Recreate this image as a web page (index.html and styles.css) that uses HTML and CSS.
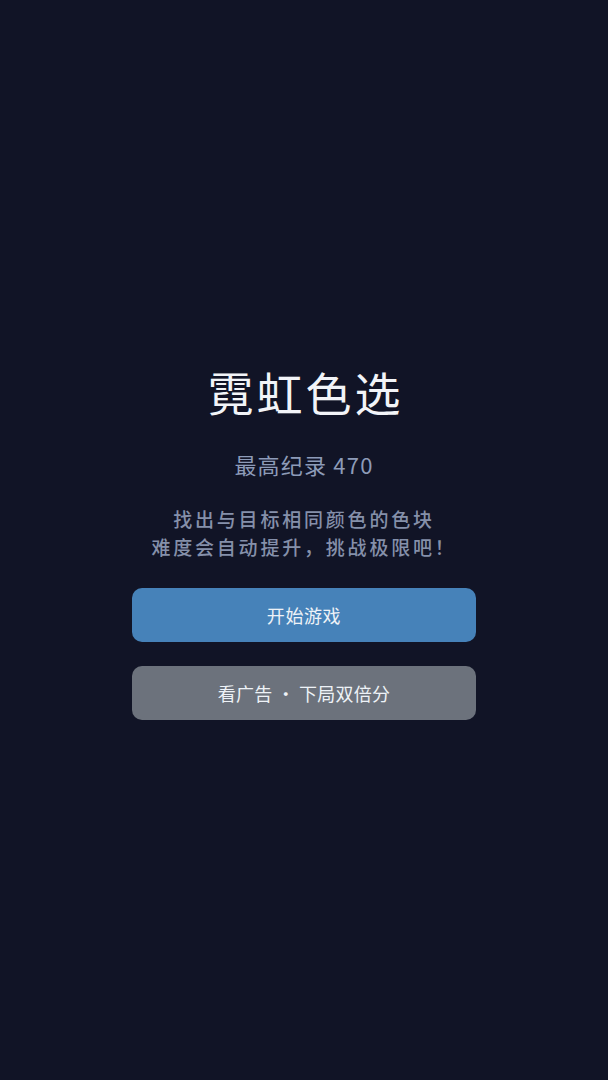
FILE: index.html
```html
<!DOCTYPE html>
<html lang="zh">
<head>
<meta charset="utf-8">
<link rel="stylesheet" href="styles.css">
</head>
<body>
<main class="screen">
  <h1 class="title">霓虹色选</h1>
  <p class="best">最高纪录 470</p>
  <p class="desc">找出与目标相同颜色的色块<br>难度会自动提升，挑战极限吧！</p>
  <button class="btn btn-start">开始游戏</button>
  <button class="btn btn-ad">看广告 · 下局双倍分</button>
</main>
</body>
</html>
```

FILE: styles.css
```css
html, body {
  margin: 0;
  padding: 0;
  background: #111426;
}
.screen {
  height: 1080px;
  box-sizing: border-box;
  padding-top: 3px;
  display: flex;
  flex-direction: column;
  align-items: center;
  justify-content: center;
  font-family: "Noto Sans CJK SC", "Noto Sans", sans-serif;
}
.title {
  margin: 0;
  font-size: 46px;
  font-weight: 400;
  color: #f2f4f8;
  line-height: 56px;
  letter-spacing: 3px;
  text-indent: 3px;
}
.best {
  margin: 31px 0 0;
  font-size: 22px;
  line-height: 28px;
  color: #8d9bb8;
  letter-spacing: 1.2px;
}
.desc {
  margin: 27px 0 0;
  font-size: 19px;
  font-weight: 500;
  line-height: 28px;
  color: #8590aa;
  text-align: center;
  letter-spacing: 2.8px;
}
.btn {
  width: 344px;
  height: 54px;
  border: none;
  border-radius: 10px;
  font-family: inherit;
  font-size: 18px;
  letter-spacing: 0.6px;
  color: #eef2f7;
  padding: 0;
}
.btn-start {
  margin-top: 27px;
  background: #4682b9;
}
.btn-ad {
  margin-top: 24px;
  background: #6c727c;
  letter-spacing: 0.2px;
}
```
